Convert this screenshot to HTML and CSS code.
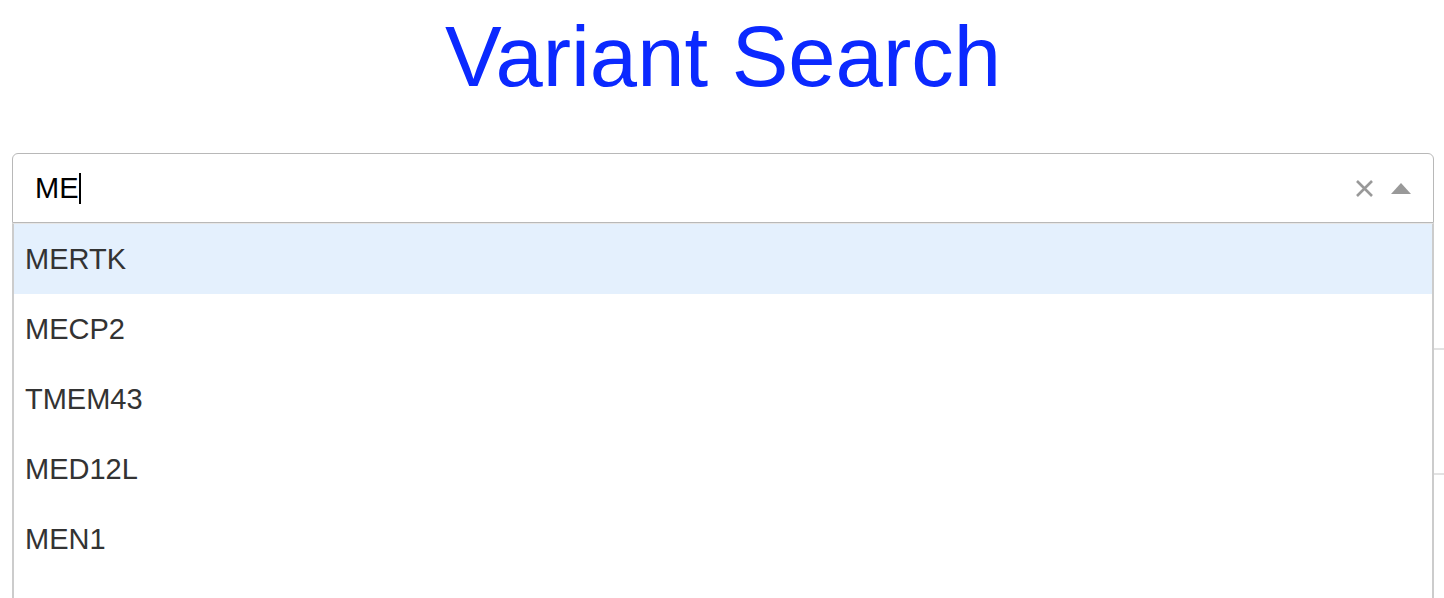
FILE: index.html
```html
<!DOCTYPE html>
<html lang="en">
<head>
<meta charset="utf-8">
<title>Variant Search</title>
<link rel="stylesheet" href="styles.css">
</head>
<body>
<main class="page">
  <h1 class="title">Variant Search</h1>
  <div class="select">
    <div class="control">
      <div class="input">ME<span class="caret"></span></div>
      <span class="clear" aria-label="Clear">
        <svg width="19" height="19" viewBox="0 0 19 19"><path d="M2 2 L17 17 M17 2 L2 17" stroke="#999" stroke-width="2.6" fill="none"/></svg>
      </span>
      <span class="arrow"></span>
    </div>
    <div class="menu">
      <div class="option is-focused">MERTK</div>
      <div class="option">MECP2</div>
      <div class="option">TMEM43</div>
      <div class="option">MED12L</div>
      <div class="option">MEN1</div>
    </div>
  </div>
  <div class="results">
    <div class="row"></div>
    <div class="row"></div>
  </div>
</main>
</body>
</html>
```

FILE: styles.css
```css
html {
  overflow: hidden;
  background: #ffffff;
}

body {
  margin: 0;
  padding: 0;
  min-height: 598px;
  font-family: "Liberation Sans", Arial, Helvetica, sans-serif;
  color: #333333;
}

.page {
  padding: 0 10px 0 12px;
}

.title {
  margin: 0 0 39px 0;
  font-weight: normal;
  font-size: 85px;
  line-height: 114px;
  text-align: center;
  color: #0b29ff;
}

.select {
  position: relative;
}

.control {
  box-sizing: border-box;
  height: 70px;
  display: flex;
  align-items: center;
  border: 1px solid #b8b8b8;
  border-radius: 6px 6px 0 0;
  background: #fff;
  padding: 0 22px 0 22px;
}

.input {
  flex: 1;
  font-size: 29px;
  color: #000;
  display: flex;
  align-items: center;
}

.caret {
  display: inline-block;
  width: 2px;
  height: 31px;
  background: #000;
}

.clear {
  display: flex;
  align-items: center;
  margin-right: 17px;
}

.arrow {
  width: 0;
  height: 0;
  border-left: 10px solid transparent;
  border-right: 10px solid transparent;
  border-bottom: 11px solid #999;
}

.menu {
  position: absolute;
  top: 100%;
  left: 0;
  right: 0;
  height: 375px;
  overflow: hidden;
  box-sizing: border-box;
  background: #fff;
  border: 2px solid #cccccc;
  border-top: 1px solid #e6e6e6;
  border-bottom: none;
  z-index: 2;
}

.option {
  box-sizing: border-box;
  height: 70px;
  display: flex;
  align-items: center;
  padding: 0 11px;
  font-size: 29px;
  color: #333;
}

.option.is-focused {
  background: #e4f0fd;
}

.results {
  margin: 2px -10px 0 0;
}

.row {
  box-sizing: border-box;
  height: 125px;
  border-bottom: 2px solid #e2e2e2;
}
```
